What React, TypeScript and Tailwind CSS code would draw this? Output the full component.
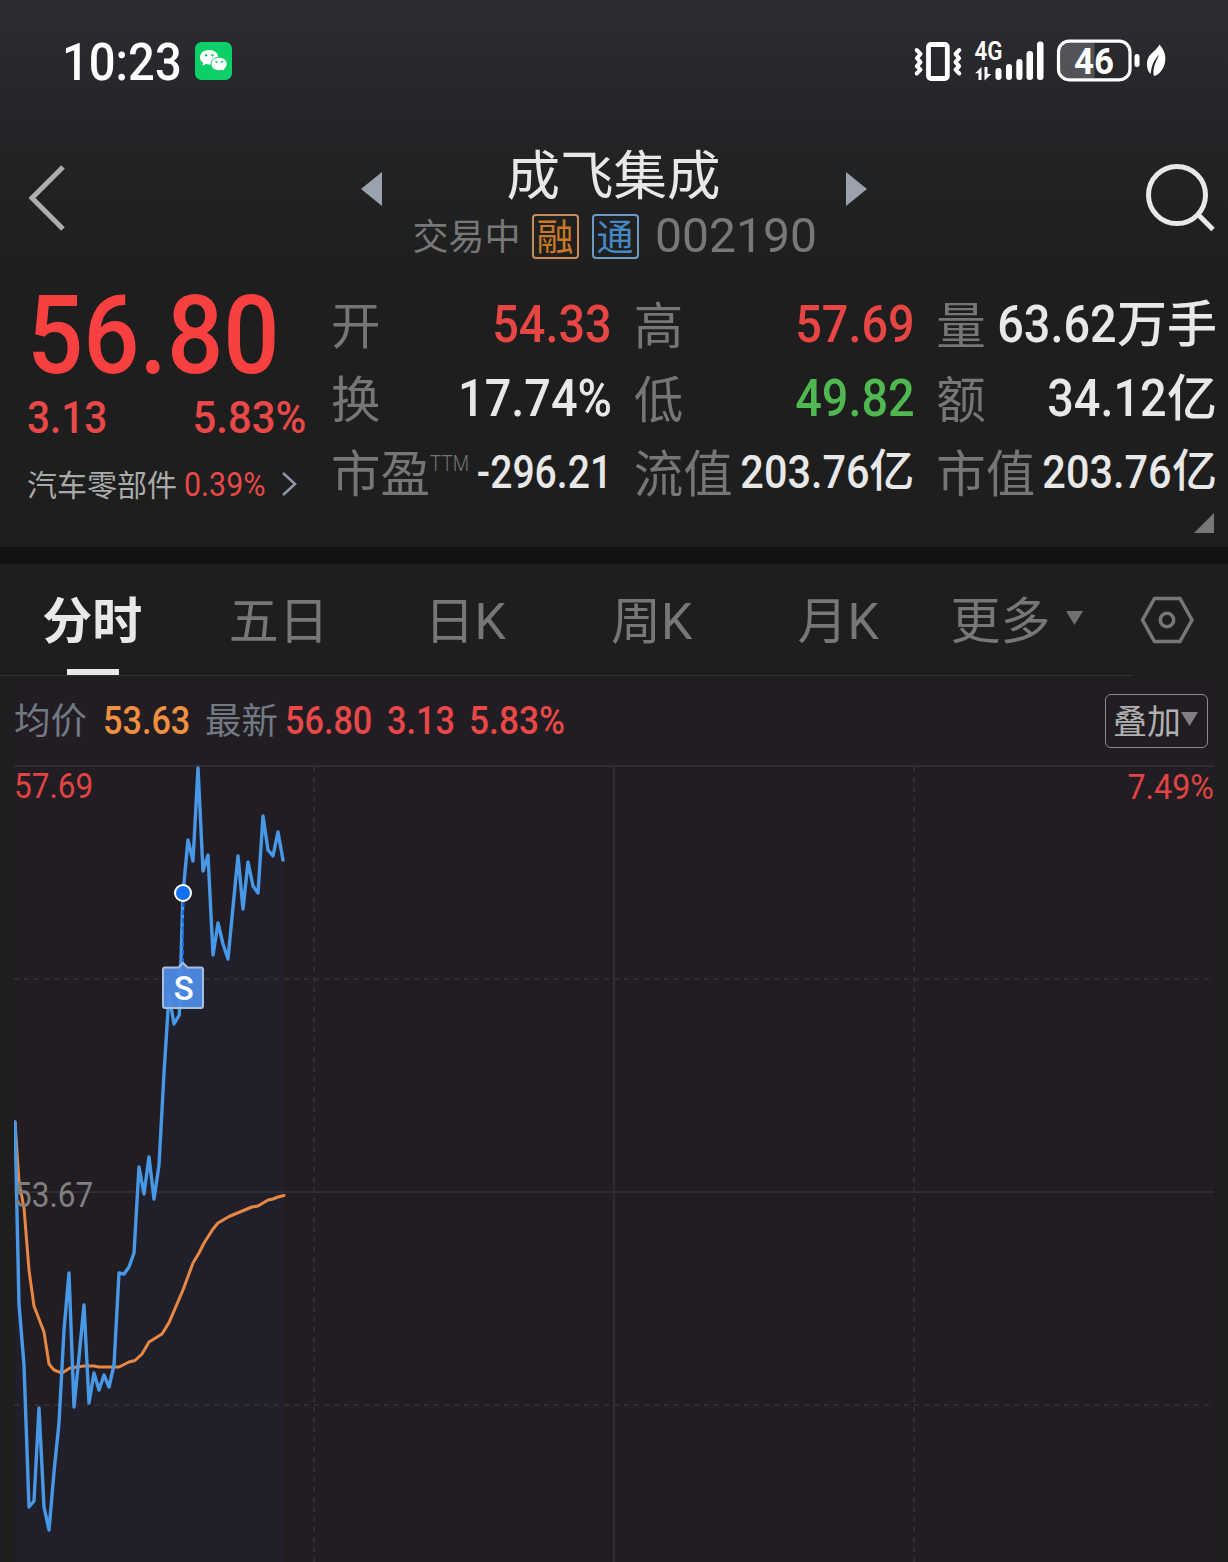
import React from "react";
import clsx from "clsx";

const PRICE =
  "15,1122 19,1304 24,1365 29,1507 34,1501 39,1408 44,1507 49,1530 54,1472 59,1423 64,1330 69,1273 74,1407 79,1357 84,1305 89,1403 94,1373 99,1390 104,1375 109,1387 114,1365 119,1273 124,1274 129,1267 134,1253 139,1167 144,1194 149,1157 154,1199 159,1165 164,1073 169,995 174,1024 179.3,1015 183,893 188,840 193,861 198,768 203,871 208,855 213,955 218,923 223,944 228,959 233,907 238,856 243,909 248,862 253,886 258,893 263,816 268,850 273,856 278,832 283,860";

const AVERAGE =
  "15,1122 19,1182 24,1208 29,1270 34,1306 44,1332 49,1364 54,1370 62,1373 70,1368 84,1366 94,1366 99,1367 119,1367 129,1362 135,1360.5 142,1354 149,1342 162,1334 169,1322.6 183,1290 193,1263 199,1253 204,1243 213,1229 218,1223 229,1216.5 252,1207 258,1206 268,1200 273,1199 278,1197 284,1195.5";

const stats = [
  { label: "开", value: "54.33", color: "text-[#e84545]" },
  { label: "高", value: "57.69", color: "text-[#e84545]" },
  { label: "量", value: "63.62", unit: "万手", color: "text-[#e8e8e8]" },
  { label: "换", value: "17.74%", color: "text-[#e8e8e8]" },
  { label: "低", value: "49.82", color: "text-[#50b850]" },
  { label: "额", value: "34.12", unit: "亿", color: "text-[#e8e8e8]" },
  { label: "市盈", sup: "TTM", value: "-296.21", color: "text-[#e8e8e8]", small: true },
  { label: "流值", value: "203.76", unit: "亿", color: "text-[#e8e8e8]", small: true },
  { label: "市值", value: "203.76", unit: "亿", color: "text-[#e8e8e8]", small: true },
];

const tabs = ["分时", "五日", "日K", "周K", "月K"];

function StatusBar() {
  return (
    <div className="flex h-[124px] items-start justify-between pl-[62px] pr-[60px]">
      <div className="flex items-center pt-[33px]">
        <span className="w-[133px] origin-left scale-x-[0.925] whitespace-nowrap pt-0.5 text-[51px] font-medium leading-[56px] text-white">
          10:23
        </span>
        {/* WeChat */}
        <svg className="-mt-0.5" width="37" height="38" viewBox="0 0 37 38">
          <rect width="37" height="38" rx="6.5" fill="#0bcf67" />
          <path d="M14 8c-5.300 0-9 3.200-9 7.200 0 2.300 1.200 4.200 3.200 5.600l-.7 3 3.300-1.800c1 .3 2.100.5 3.200.5 5.200 0 9.200-3.200 9.200-7.300S19.200 8 14 8z" fill="#fff" />
          <path d="M24.200 15.200c-4.700 0-8.200 3-8.200 6.700 0 3.800 3.500 6.800 8.200 6.800 1 0 2-.2 2.900-.4l2.700 1.500-.6-2.500c1.800-1.300 2.900-3.200 2.900-5.400 0-3.700-3.500-6.700-7.900-6.700z" fill="#fff" stroke="#0bcf67" strokeWidth="1" />
          <g fill="#0bcf67">
            <circle cx="11" cy="13.300" r="1.200" />
            <circle cx="17.500" cy="13.300" r="1.200" />
            <circle cx="21.500" cy="20" r="1.100" />
            <circle cx="27" cy="20" r="1.100" />
          </g>
        </svg>
      </div>
      <svg className="mt-9" width="256" height="50" viewBox="912 36 256 50">
        <g fill="none" stroke="#fff" strokeWidth="4" strokeLinejoin="round" strokeLinecap="round">
          <rect x="928.500" y="44.500" width="18.800" height="34" rx="2.500" strokeWidth="4.800" />
          <path d="M916.700 50l3.800 4-3.600 4.200 3.600 4-3.600 4 3.600 3.500-3.800 3.800" />
          <path d="M959.300 50l-3.800 4 3.600 4.200-3.600 4 3.600 4-3.600 3.500 3.800 3.800" />
          <rect x="1058.500" y="41.200" width="71.500" height="38.600" rx="10.500" strokeWidth="3.200" />
        </g>
        <text x="974.500" y="60" fontSize="25.500" fontWeight="600" fill="#fff" textLength="28" lengthAdjust="spacingAndGlyphs">4G</text>
        <g fill="#fff">
          <path d="M975 73.500l6.500-6.500v13h-3v-7z" />
          <path d="M984.500 67h3v7h3.800l-6.800 6.500z" />
          <rect x="995.500" y="68" width="6" height="12" rx="3" />
          <rect x="1006" y="64" width="6" height="16" rx="3" />
          <rect x="1016.300" y="59" width="6.200" height="21" rx="3" />
          <rect x="1026.500" y="51" width="6.500" height="29" rx="3" />
          <rect x="1037" y="41.500" width="6.500" height="38.500" rx="3" />
          <path d="M1069 43h25.500v35h-25.500a9 9 0 0 1-9-9V52a9 9 0 0 1 9-9z" opacity="0.2" />
          <rect x="1134.500" y="54" width="5" height="13" rx="2.500" />
          <path d="M1159.500 44.500c5 5.500 7.500 13 4.800 20.500-2 6-6 10-10.300 11-1.300-3 0-9 1-12 1-3.200 3-6.200 4-9.500-3.500 4-6 8-7 12-.7 2.800-1 5-1.300 7.500-4-3.500-4.700-11-2.500-16 2.500-5.500 8.300-7.500 11.300-13.500z" />
        </g>
        <text x="1074" y="74" fontSize="37" fontWeight="700" fill="#fff" textLength="40" lengthAdjust="spacingAndGlyphs">46</text>
      </svg>
    </div>
  );
}

function TitleBar() {
  return (
    <div className="flex h-[160px] justify-between pl-7 pr-3">
      <svg className="mt-[41px]" width="40" height="66" viewBox="0 0 40 66">
        <path d="M35 2L4 33l31 31" fill="none" stroke="#adadad" strokeWidth="5" />
      </svg>
      <div className="ml-[15px] flex w-[506px] flex-col items-center">
        <div className="flex h-[87px] w-full justify-between">
          <svg className="mt-12" width="21" height="34" viewBox="0 0 21 34">
            <path d="M21 0v34L0 17z" fill="#9aa2ad" />
          </svg>
          <h1 className="mt-[21px] text-[53.500px] leading-[64px] text-[#e8e8e8]">成飞集成</h1>
          <svg className="mt-12" width="21" height="34" viewBox="0 0 21 34">
            <path d="M0 0v34l21-17z" fill="#9aa2ad" />
          </svg>
        </div>
        <div className="flex items-center pl-px text-[#787878]">
          <span className="w-[119px] pt-1 text-[36px] leading-[46px]">交易中</span>
          <span className="mr-[13px] flex h-[45px] w-[47px] items-center justify-center rounded border-2 border-[#c58d5e] pt-1 text-[37px] leading-none text-[#c87828]">
            融
          </span>
          <span className="mr-4 flex h-[45px] w-[47px] items-center justify-center rounded border-2 border-[#7098c4] pt-1 text-[37px] leading-none text-[#4688c4]">
            通
          </span>
          <span className="w-[161px] origin-left scale-x-[0.98] text-[49px] leading-[48px]">002190</span>
        </div>
      </div>
      <svg className="mt-[38px]" width="72" height="72" viewBox="1.500 0 72 72">
        <circle cx="34.500" cy="33" r="28.500" fill="none" stroke="#e8e8e8" strokeWidth="5" />
        <path d="M55 52l15.500 15.500" stroke="#e8e8e8" strokeWidth="5" />
      </svg>
    </div>
  );
}

function Quote() {
  return (
    <div className="relative flex h-[263px]">
      <div className="w-[332px] pl-[27px] pt-[3px]">
        <div className="h-[98px] w-[280px] origin-left scale-x-[0.9] whitespace-nowrap text-[110px] font-medium leading-[98px] text-[#f84040]">
          56.80
        </div>
        <div className="mt-[6px] flex h-[54px] w-[279px] justify-between text-[45px] font-medium leading-[54px] text-[#e84848]">
          <span className="origin-left scale-x-[0.9]">3.13</span>
          <span className="origin-right scale-x-[0.93]">5.83%</span>
        </div>
        <div className="mt-5 flex h-10 items-center">
          <span className="w-[157px] text-[30px] text-[#aaaaaa]">汽车零部件</span>
          <span className="w-[97px] origin-left scale-x-[0.92] text-[33px] text-[#e84848]">0.39%</span>
          <svg className="-mt-0.5" width="18" height="26" viewBox="0 0 18 26">
            <path d="M2 2l12 11L2 24" fill="none" stroke="#8d97a5" strokeWidth="2.500" />
          </svg>
        </div>
      </div>
      <div className="-ml-px grid h-[222px] w-[886px] grid-cols-3 gap-x-[22px] pt-[3px]">
        {stats.map((s) => (
          <div key={s.label} className="flex h-[74px] items-center justify-between">
            <span className="flex whitespace-nowrap pt-[7px] text-[49.500px] leading-[73px] text-[#767676]">
              {s.label}
              {s.sup && <span className="-mt-3 w-0 origin-left scale-x-[0.86] text-[22px] font-light">{s.sup}</span>}
            </span>
            <span className={clsx("flex w-0 justify-end whitespace-nowrap pt-px font-medium", s.color, s.small ? "text-[46px]" : "text-[52px]")}>
              <span className={clsx("origin-right", s.sup ? "scale-x-[0.85]" : "scale-x-[0.9]")}>{s.value}</span>
              {s.unit && <span className={s.small ? "text-[45px]" : "pt-0.5 text-[50px]"}>{s.unit}</span>}
            </span>
          </div>
        ))}
      </div>
      <svg className="absolute bottom-[14px] right-[14px]" width="20" height="20" viewBox="0 0 20 20">
        <path d="M20 0v20H0z" fill="#777" />
      </svg>
    </div>
  );
}

function Tabs() {
  return (
    <div className="flex h-28 bg-[#1e1e1e] text-[50px] text-[#777777]">
      <div className="flex w-[1133px] border-b border-[#303030]">
        {tabs.map((tab, i) => (
          <div
            key={tab}
            className={clsx("relative flex w-[186.500px] shrink-0 justify-center pr-[2px] leading-[117px]", i === 0 && "font-bold text-[#e8e8e8]")}
          >
            {tab}
            {i === 0 && <span className="absolute bottom-0 left-[67px] h-1.5 w-[52px] bg-[#e8e8e8]" />}
          </div>
        ))}
        <div className="flex h-[111px] items-center whitespace-nowrap pl-[18px]">
          <span className="pt-[5px] leading-[111px]">更多</span>
          <svg className="-mt-1 ml-[15px] shrink-0" width="17" height="14" viewBox="0 0 17 14">
            <path d="M0 0h17L8.500 14z" fill="#707070" />
          </svg>
        </div>
      </div>
      <svg className="ml-[7px] mt-[31px]" width="54" height="50" viewBox="0 0 54 50">
        <path d="M14.500 3.500h25.500l12 21.500-12 21.500H14.500L2.500 25z" fill="none" stroke="#777" strokeWidth="3.500" />
        <circle cx="27" cy="25" r="6.700" fill="none" stroke="#777" strokeWidth="3.500" />
      </svg>
    </div>
  );
}

function Chart() {
  return (
    <div className="relative mx-[14px] h-[886px] bg-[#221d22]">
      <div className="flex h-[89px] items-center text-[38px] font-medium text-[#e84848]">
        <span className="w-[89px] pt-1 text-[36.500px] font-normal text-[#727983]">均价</span>
        <span className="w-[102px] origin-left scale-x-[0.9] pt-0.5 text-[#f09040]">53.63</span>
        <span className="w-[80px] pt-1 text-[36.500px] font-normal text-[#727983]">最新</span>
        <span className="w-[102px] origin-left scale-x-[0.9] pt-0.5">56.80</span>
        <span className="w-[82px] origin-left scale-x-[0.9] pt-0.5">3.13</span>
        <span className="origin-left scale-x-[0.93] pt-0.5">5.83%</span>
        <div className="ml-auto mr-1.5 mt-px flex h-[54px] w-[103px] items-center rounded-md border-[1.500px] border-[#8c8a8c] pl-[7px] text-[34px] font-normal leading-none text-[#b0b0b0]">
          <span className="pt-0.5">叠加</span>
          <svg className="-mt-1 shrink-0" width="17" height="14" viewBox="0 0 17 14">
            <path d="M0 0h17L8.500 14z" fill="#808080" />
          </svg>
        </div>
      </div>
      <svg className="block" width="1200" height="797" viewBox="14 765 1200 797">
        <polygon points={`15,1562 ${PRICE} 283,1562`} fill="#21202a" />
        <g stroke="#312c31" strokeWidth="2">
          <path d="M14 766h1200M14 1192h1200M614 765v797" />
          <path d="M14 979h1200M14 1405h1200M314 767v795M914 767v795" strokeDasharray="5 5" />
        </g>
        <polyline points={AVERAGE} fill="none" stroke="#e88844" strokeWidth="3" strokeLinejoin="round" strokeLinecap="round" />
        <polyline points={PRICE} fill="none" stroke="#4898e8" strokeWidth="3.400" strokeLinejoin="round" strokeLinecap="round" />
        {/* sell marker */}
        <path d="M183 902v62" stroke="#1468d8" strokeWidth="2" strokeDasharray="5 3" />
        <circle cx="183" cy="893" r="8" fill="#1070f0" stroke="#fff" strokeWidth="2" />
        <path d="M165 967.500h13.500l4.500-4.500 4.500 4.500H201q2 0 2 2v36q0 2.500-2 2.500h-36q-2 0-2-2.500v-36q0-2 2-2z" fill="#4d8be4" fillOpacity="0.95" stroke="#a9bddd" strokeWidth="2" />
        <text x="183.700" y="1000" textAnchor="middle" fontSize="33" fontWeight="500" fill="#fff">S</text>
      </svg>
      <span className="absolute left-0 top-[91px] origin-left scale-x-[0.9] text-[35px] leading-10 text-[#e04444]">57.69</span>
      <span className="absolute right-0 top-[92px] origin-right scale-x-[0.92] text-[35px] leading-10 text-[#e04444]">7.49%</span>
      <span className="absolute left-0 top-[500px] origin-left scale-x-[0.9] text-[35px] leading-10 text-[#808080]">53.67</span>
    </div>
  );
}

export default function App() {
  return (
    <div className="h-[1562px] w-[1228px] overflow-hidden bg-[#1e1e1e] font-['Roboto','Noto_Sans_CJK_SC',sans-serif]">
      <div className="bg-[linear-gradient(#2c2d32_0px,#222325_150px,#1e1e1e_280px)]">
        <StatusBar />
        <TitleBar />
        <Quote />
      </div>
      <div className="h-[17px] bg-[#121212]" />
      <Tabs />
      <Chart />
    </div>
  );
}
